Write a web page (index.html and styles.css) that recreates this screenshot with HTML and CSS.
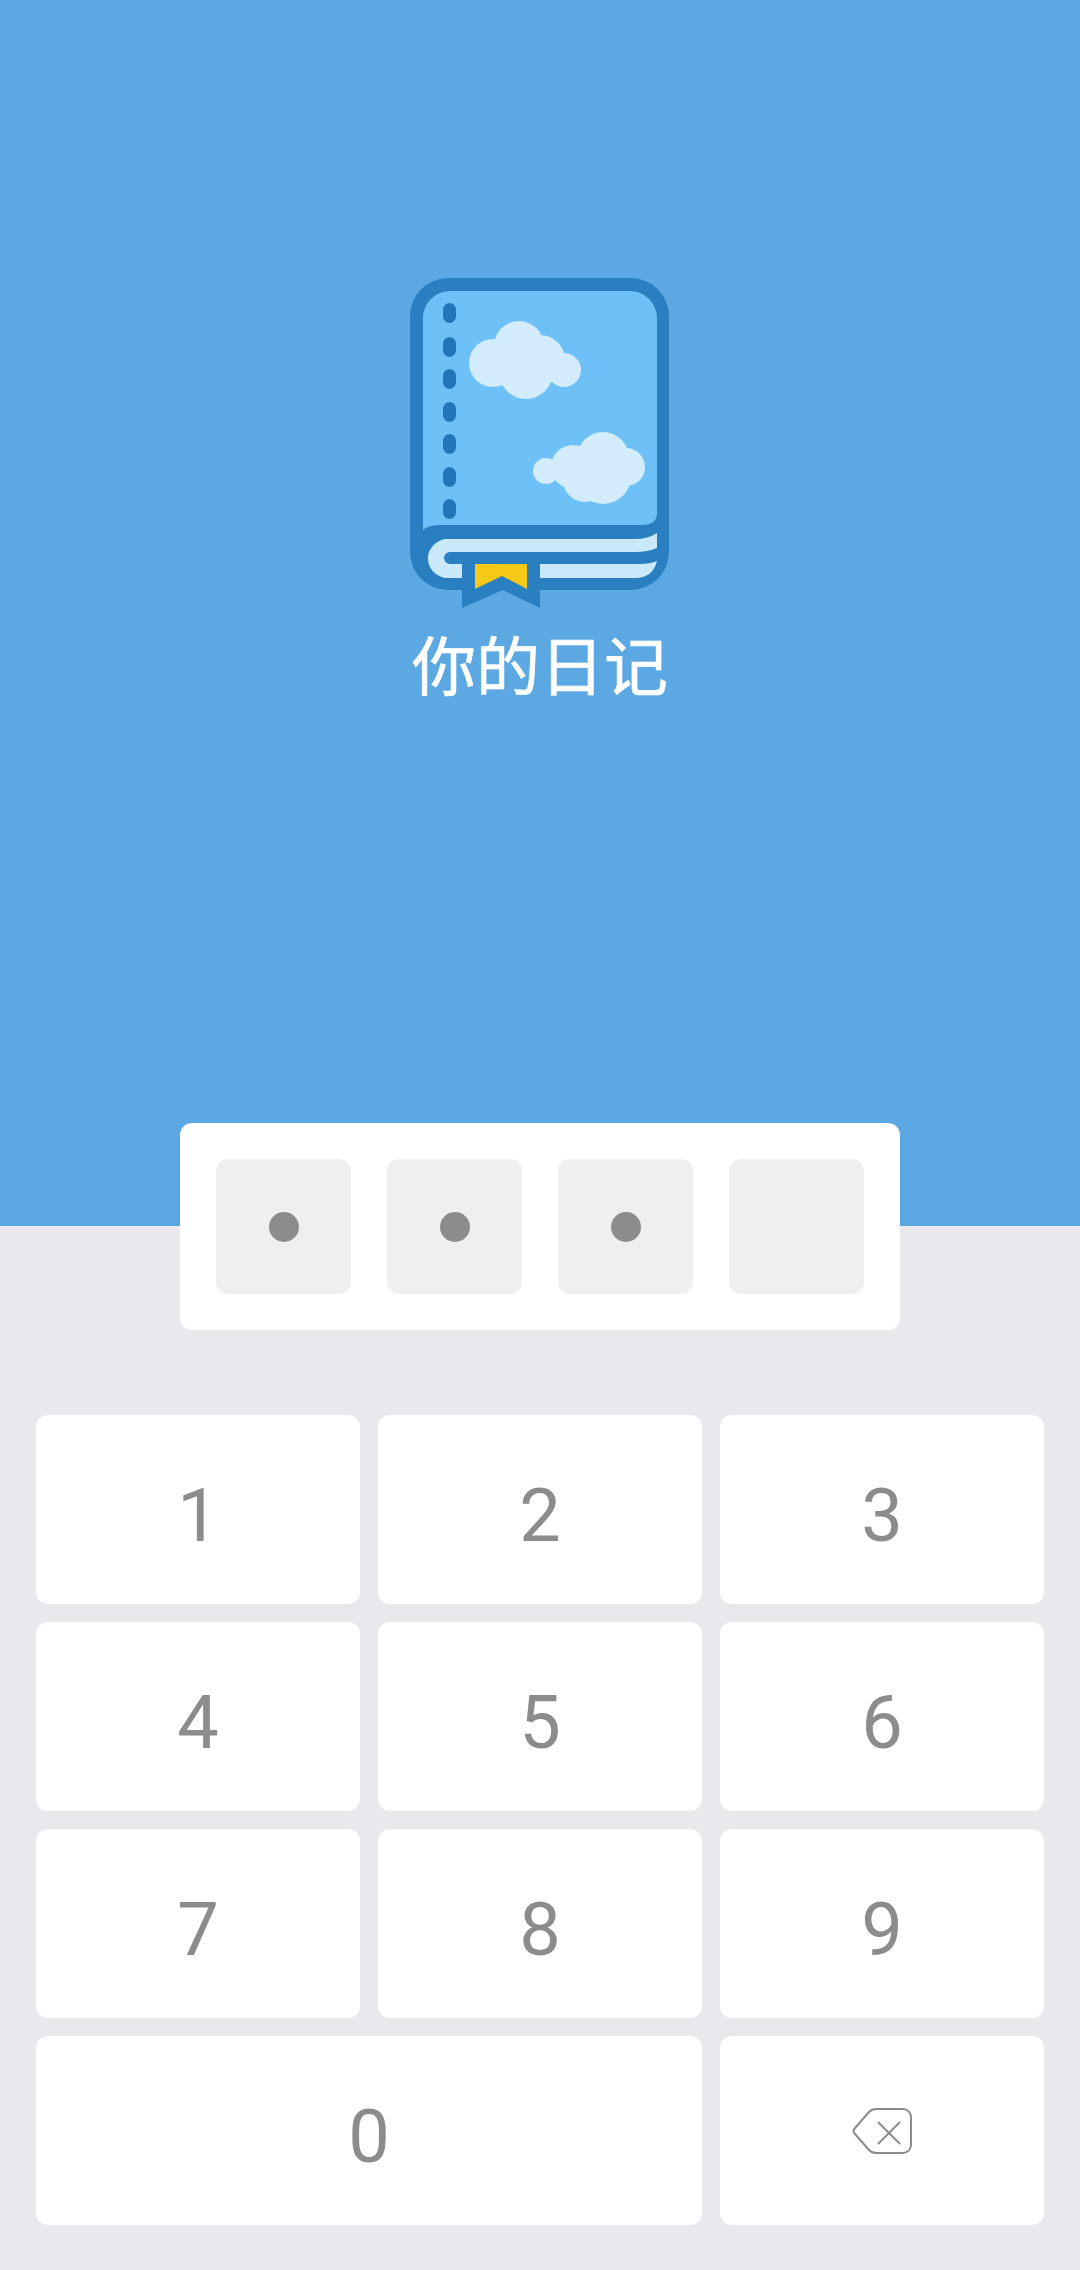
FILE: index.html
```html
<!DOCTYPE html>
<html lang="en">
<head>
    <meta charset="UTF-8">
    <meta name="viewport" content="width=device-width, initial-scale=1.0">
    <title>你的日记</title>
    <link rel="stylesheet" href="styles.css">
</head>
<body>
    <div class="hero">
        <svg class="logo" width="300" height="350" viewBox="0 0 300 350">
            <rect x="20" y="18" width="259" height="312" rx="38" fill="#2a7fc1"/>
            <!-- cover -->
            <path d="M33 270V58a27 27 0 0 1 27-27H240a27 27 0 0 1 27 27V253q0 12-15 12H50q-11 0-17 5z" fill="#6dc1f6"/>
            <!-- spine holes -->
            <g fill="#2176b8">
                <rect x="53" y="43" width="13" height="20" rx="6.5"/>
                <rect x="53" y="77" width="13" height="20" rx="6.5"/>
                <rect x="53" y="109" width="13" height="20" rx="6.5"/>
                <rect x="53" y="142" width="13" height="20" rx="6.5"/>
                <rect x="53" y="174" width="13" height="20" rx="6.5"/>
                <rect x="53" y="207" width="13" height="20" rx="6.5"/>
                <rect x="53" y="239" width="13" height="20" rx="6.5"/>
            </g>
            <g fill="#d2ecfc">
                <circle cx="103" cy="103" r="24"/>
                <circle cx="129" cy="86" r="25"/>
                <circle cx="136" cy="112" r="27"/>
                <circle cx="150" cy="100" r="25"/>
                <circle cx="174" cy="110" r="17"/>
                <circle cx="156" cy="211" r="13"/>
                <circle cx="183" cy="207" r="22"/>
                <circle cx="195" cy="220" r="22"/>
                <circle cx="213" cy="198" r="26"/>
                <circle cx="213" cy="216" r="28"/>
                <circle cx="236" cy="207" r="19"/>
            </g>
            <!-- pages -->
            <path d="M267 273V288Q258 292 245 292H60a6 6 0 0 0 0 12H72V318H55A22 20 0 0 1 55 279H245Q258 279 267 273z" fill="#c9e9fb"/>
            <path d="M150 304H250Q260 304 267 301Q263 318 245 318H150z" fill="#c9e9fb"/>
            <!-- bookmark -->
            <path d="M72 298H150V348L113 330L72 348z" fill="#2a7fc1"/>
            <path d="M85 304H137V329L112 316L85 329z" fill="#f5c916"/>
        </svg>
        <h1 class="app-title">你的日记</h1>
    </div>

    <div class="pin-card">
        <div class="pin-cell"><span class="pin-dot"></span></div>
        <div class="pin-cell"><span class="pin-dot"></span></div>
        <div class="pin-cell"><span class="pin-dot"></span></div>
        <div class="pin-cell"></div>
    </div>

    <div class="keypad">
        <div class="key">1</div>
        <div class="key">2</div>
        <div class="key">3</div>
        <div class="key">4</div>
        <div class="key">5</div>
        <div class="key">6</div>
        <div class="key">7</div>
        <div class="key">8</div>
        <div class="key">9</div>
        <div class="key key-zero">0</div>
        <div class="key key-back">
            <svg width="60" height="46" viewBox="0 0 60 46" fill="none" stroke="#8c8c8c" stroke-width="2" stroke-linejoin="round">
                <path d="M24 1H51a8 8 0 0 1 8 8V37a8 8 0 0 1-8 8H24q-4 0-7-3L3 26q-3-3 0-6L17 4q3-3 7-3z"/>
                <path d="M26 14L48 36M48 14L26 36"/>
            </svg>
        </div>
    </div>
</body>
</html>
```

FILE: styles.css
```css
body {
    margin: 0;
    padding: 0;
    width: 1080px;
    height: 2270px;
    overflow: hidden;
    background-color: #e9e9ed;
    font-family: Roboto, "Noto Sans CJK SC", sans-serif;
}
.hero {
    height: 1226px;
    padding-top: 260px;
    box-sizing: border-box;
    background-color: #5ca8e2;
    display: flex;
    flex-direction: column;
    align-items: center;
}
.logo {
    display: block;
    filter: blur(0.6px);
}
.app-title {
    margin: 19px 0 0;
    font-family: "Noto Sans CJK SC", sans-serif;
    font-size: 64px;
    line-height: 66px;
    font-weight: 400;
    -webkit-text-stroke: 0.7px #fff;
    color: #fff;
}
.pin-card {
    width: 720px;
    height: 207px;
    margin: -103px auto 0;
    padding: 36px;
    box-sizing: border-box;
    background-color: #fff;
    border-radius: 12px;
    display: flex;
    gap: 36px;
    position: relative;
}
.pin-cell {
    width: 135px;
    height: 135px;
    background-color: #efeff0;
    border-radius: 12px;
    display: flex;
    align-items: center;
    justify-content: center;
}
.pin-dot {
    width: 30px;
    height: 30px;
    border-radius: 50%;
    background-color: #8c8c8c;
}
.keypad {
    margin: 85px 36px 0;
    display: grid;
    grid-template-columns: repeat(3, 324px);
    grid-auto-rows: 189px;
    gap: 18px;
}
.key {
    background-color: #fff;
    border-radius: 12px;
    display: flex;
    align-items: center;
    justify-content: center;
    font-size: 74px;
    font-weight: 400;
    color: #8c8c8c;
    padding-top: 12px;
    box-sizing: border-box;
}
.key-back {
    padding-top: 0;
}
.key-zero {
    grid-column: span 2;
}
```
